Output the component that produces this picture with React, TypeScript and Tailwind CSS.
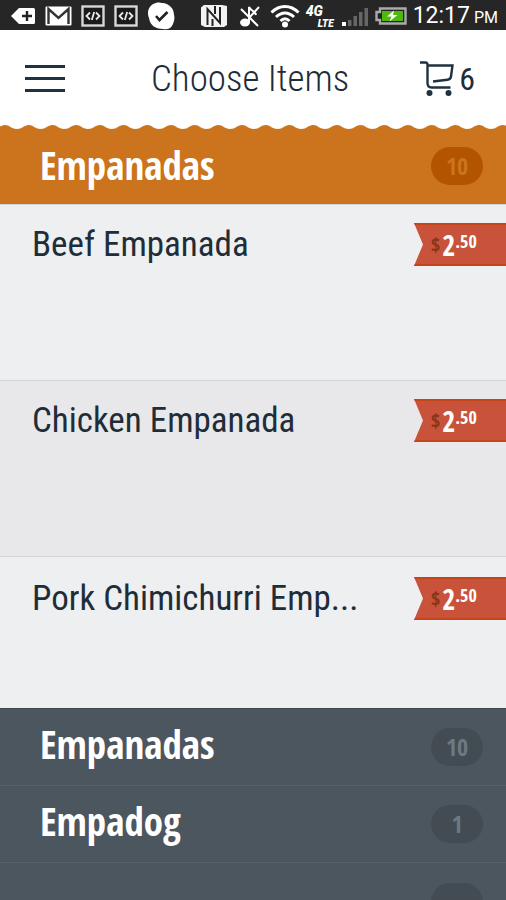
import type { ReactNode } from "react";

const items = [
  { name: "Beef Empanada", whole: "2", cents: ".50" },
  { name: "Chicken Empanada", whole: "2", cents: ".50" },
  { name: "Pork Chimichurri Emp...", whole: "2", cents: ".50" },
];

const categories = [
  { name: "Empanadas", count: 10 },
  { name: "Empadog", count: 1 },
];

function CodeIcon() {
  return (
    <svg viewBox="0 0 24 24" className="h-6 w-6">
      <rect x="1.5" y="2.5" width="21" height="19" fill="#1a1a1a" stroke="#d8d8d8" strokeWidth="2.4" />
      <path d="M9 8.5 5.5 12 9 15.5M15 8.5l3.5 3.5-3.5 3.5M13.2 8l-2.4 8" fill="none" stroke="#e8e8e8" strokeWidth="1.8" />
    </svg>
  );
}

function StatusBar() {
  return (
    <div className="flex h-[30px] shrink-0 items-center justify-between bg-[#262626] pr-2 pl-2.5 pt-0.5 font-[Roboto,sans-serif] text-white">
      <div className="flex items-center gap-[9px]">
        <svg viewBox="0 0 26 22" className="h-[22px] w-[26px]">
          <path d="M9 3h14.5a1.5 1.5 0 0 1 1.5 1.5v13a1.5 1.5 0 0 1-1.5 1.5H9L1 11z" fill="#fff" />
          <path d="M17 6v10M12 11h10" stroke="#222" strokeWidth="2.4" />
        </svg>
        <svg viewBox="0 0 27 22" className="h-[22px] w-[27px]">
          <rect x="0.5" y="1.5" width="26" height="19" rx="1" fill="#fff" />
          <path d="M3.5 19V4L13.5 13 23.5 4v15" fill="none" stroke="#333" strokeWidth="2.4" />
        </svg>
        <CodeIcon />
        <CodeIcon />
        <svg viewBox="0 0 28 28" className="h-7 w-7">
          <path d="M9 1c3-1 4 0 7 0 7 1 11 6 11 12 1 3 0 6-1 9-2 5-7 6-10 5C8 27 3 23 2 16-1 9 3 2 9 1z" fill="#fff" />
          <path d="m9 14 3.5 4 8-8" fill="none" stroke="#222" strokeWidth="2.6" />
        </svg>
      </div>
      <div className="flex items-center gap-1.5">
        <svg viewBox="0 0 28 24" className="h-6 w-7">
          <path d="M1 3.5 4 1h18l5 1v19l-3 2H5l-4-2z" fill="#f2f2f2" />
          <path d="M7.5 21V5L20 19V3M12.5 22V15M15 10V2" fill="none" stroke="#222" strokeWidth="2" />
        </svg>
        <svg viewBox="0 0 24 24" className="ml-1 h-6 w-6">
          <ellipse cx="7" cy="18.5" rx="5" ry="4" fill="#fff" />
          <path d="M11 18V3c2 4 6 4 7 8M3 5l17 17M11 14 21 3" fill="none" stroke="#fff" strokeWidth="2" />
        </svg>
        <svg viewBox="0 0 30 24" className="ml-0.5 h-6 w-[30px]">
          <path d="M1.5 8.5c8-8 19-8 27 0M6 13c5.5-5.5 12.5-5.5 18 0M10.5 17c3-3 6-3 9 0" fill="none" stroke="#fff" strokeWidth="3" />
          <circle cx="15" cy="20.5" r="3" fill="#fff" />
        </svg>
        <div className="flex w-7 flex-col items-start font-black italic">
          <span className="text-sm leading-[14px]">4G</span>
          <span className="self-end text-[10px] leading-[11px]">LTE</span>
        </div>
        <svg viewBox="0 0 27 22" className="ml-0.5 h-[22px] w-[27px]">
          <path d="M0 17h4v4H0z" fill="#fff" />
          <path d="M6 15h3.5v6H6zM11.5 11h3.5v10h-3.5zM17 7h3.5v14H17zM22.5 3H26v18h-3.5z" fill="#666" />
        </svg>
        <svg viewBox="0 0 32 18" className="h-[18px] w-8">
          <path d="M5 1.5h25.5v15H5V13H1.5V5H5z" fill="#222" stroke="#aaa" strokeWidth="2.4" />
          <path d="M7 4h21v10H7z" fill="#4fb80c" />
          <path d="m19 3.5-7 6h4.5L14.5 14.5l8-6.5H18z" fill="#fff" />
        </svg>
        <span className="flex items-baseline gap-1 text-[23px] leading-7 whitespace-nowrap">
          12:17 <span className="text-base">PM</span>
        </span>
      </div>
    </div>
  );
}

function CartIcon() {
  return (
    <svg viewBox="0 0 36 36" className="h-9 w-9" fill="none" stroke="#1f3242" strokeWidth="2.4">
      <path d="M1 1.5h5.5c1.500 0 2 1 2 2.500v18c0 3 1 4.500 4 4.500h19" />
      <path d="M9 4.5h24.5l-1.5 11c-.3 2-1.3 3-3.5 3.200L14 20.500" />
      <circle cx="10.5" cy="32" r="3" fill="#1f3242" stroke="none" />
      <circle cx="29.5" cy="32" r="3" fill="#1f3242" stroke="none" />
    </svg>
  );
}

// Scalloped edge between the header and the open category
function Scallops() {
  return (
    <svg className="block h-1 w-full" aria-hidden="true">
      <defs>
        <pattern id="scallop" x="-7" width="23.7" height="4" patternUnits="userSpaceOnUse">
          <path d="M0 4C6 4 7 0 12 0s6 4 11.7 4z" fill="#cb731d" />
        </pattern>
      </defs>
      <rect width="100%" height="4" fill="url(#scallop)" />
    </svg>
  );
}

function Count({ className, children }: { className: string; children?: ReactNode }) {
  return (
    <span className={`flex h-[38px] w-[52px] items-center justify-center rounded-full text-2xl font-bold ${className}`}>
      {children}
    </span>
  );
}

function Price({ whole, cents }: { whole: string; cents: string }) {
  return (
    <div className="flex h-[43px] w-[92px] shrink-0 items-start border-y-2 border-[#c5441a] bg-[#c9523a] pl-[17px] font-['Open_Sans_Condensed','Roboto_Condensed',sans-serif] font-bold text-white [clip-path:polygon(0_0,100%_0,100%_100%,0_100%,9px_50%)]">
      <span className="pt-2 text-xl leading-6 text-[#8a3518]">$</span>
      <span className="ml-0.5 pt-1 text-[28px] leading-8">{whole}</span>
      <span className="pt-1 text-lg leading-6">{cents}</span>
    </div>
  );
}

export default function App() {
  return (
    <div className="flex h-screen flex-col overflow-hidden bg-[#4c565e] font-['Roboto_Condensed',Roboto,sans-serif] text-[#1f2d38]">
      <StatusBar />

      <header className="flex h-[95px] shrink-0 items-center justify-between bg-white pt-0.5 pr-[31px] pl-[25px]">
        <button aria-label="Menu" className="flex w-14 flex-col gap-[9px]">
          <span className="h-[3px] w-10 bg-[#1f3242]" />
          <span className="h-[3px] w-10 bg-[#1f3242]" />
          <span className="h-[3px] w-10 bg-[#1f3242]" />
        </button>
        <h1 className="text-[37px] leading-10 font-light whitespace-nowrap">Choose Items</h1>
        <button aria-label="Cart, 6 items" className="flex items-center gap-1 text-[32px] leading-9">
          <CartIcon />
          6
        </button>
      </header>

      <section className="shrink-0 bg-white">
        <Scallops />
        <h2 className="h-[75px] bg-[#cb731d] font-['Open_Sans_Condensed','Roboto_Condensed',sans-serif]">
          <button className="flex h-full w-full items-center justify-between pr-[23px] pb-0.5 pl-10 text-white">
            <span className="pb-0.5 text-[39px] leading-[44px] font-bold">Empanadas</span>
            <Count className="bg-[#b25400] text-[#cb731d]">10</Count>
          </button>
        </h2>
        <ul>
          {items.map((item) => (
            <li
              key={item.name}
              className="flex h-[176px] items-start justify-between border-t border-[#d3d5d8] bg-[#edeff1] pt-[18px] pl-8 last:h-[152px] last:pt-5 even:bg-[#e8e8ea]"
            >
              <span className="text-[35px] leading-[44px] whitespace-nowrap">{item.name}</span>
              <Price whole={item.whole} cents={item.cents} />
            </li>
          ))}
        </ul>
      </section>

      <nav className="shrink-0 border-t border-[#3d474e] font-['Open_Sans_Condensed','Roboto_Condensed',sans-serif]">
        {categories.map((c) => (
          <button
            key={c.name}
            className="flex h-[77px] w-full items-center justify-between border-b border-[#566067] pr-[23px] pl-10 text-white"
          >
            <span className="pb-1.5 text-[39px] leading-[44px] font-bold">{c.name}</span>
            <Count className="bg-[#434c52] text-[#6d7982]">{c.count}</Count>
          </button>
        ))}
        <div className="flex h-[77px] items-center justify-end pr-[23px]">
          <Count className="bg-[#434c52]" />
        </div>
      </nav>
    </div>
  );
}
